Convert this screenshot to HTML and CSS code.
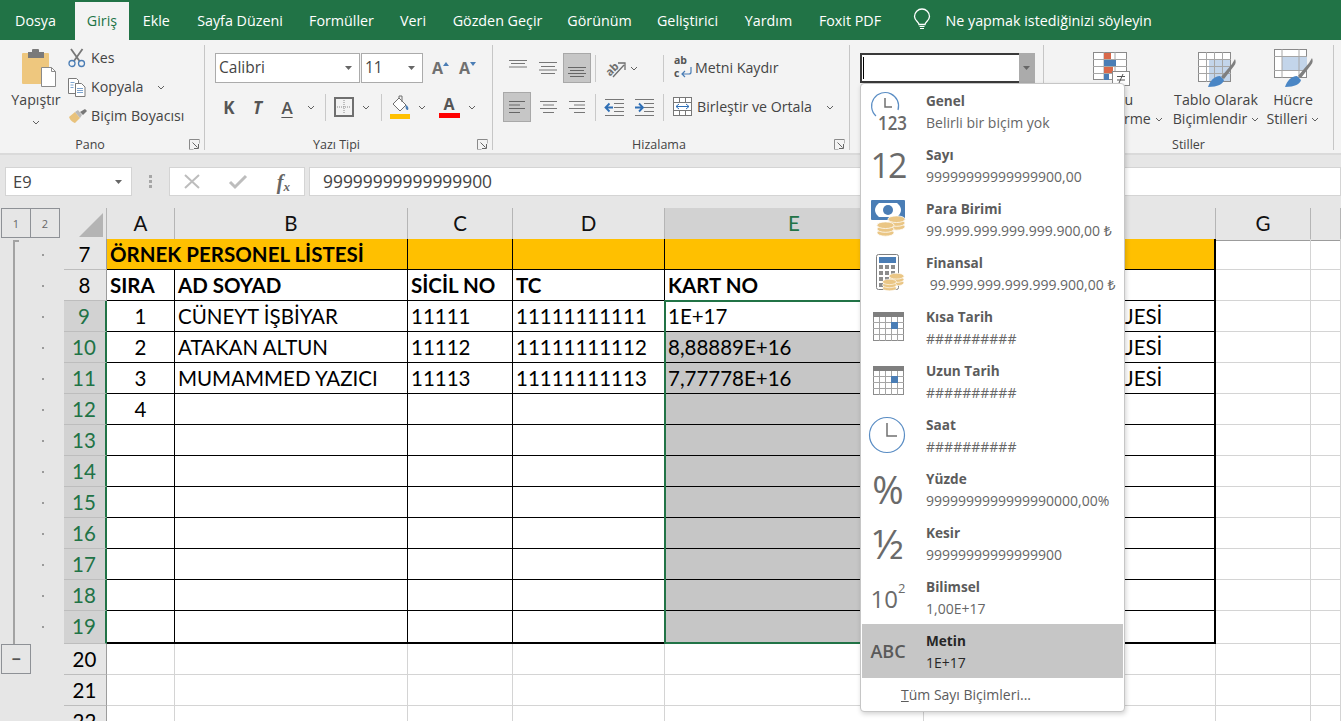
FILE: index.html
```html
<!DOCTYPE html>
<html lang="tr">
<head>
<meta charset="utf-8">
<title>Excel</title>
<link rel="stylesheet" href="styles.css">
</head>
<body>
<svg class="defs" aria-hidden="true">
  <symbol id="chev" viewBox="0 0 8 5"><path d="M1 1l3 3 3-3" fill="none" stroke="#606060" stroke-width="1"/></symbol>
  <symbol id="caret" viewBox="0 0 8 4"><path d="M0 0h7L3.500 4z" fill="#666"/></symbol>
  <symbol id="launch" viewBox="0 0 11 11"><path d="M.5 10.500V.5h10" fill="none" stroke="#8a8a8a"/><path d="M3.500 3.500l5 5M9.500 5v4.500H5" fill="none" stroke="#666"/><path d="M.5 10.500h4M10.500 .5v4" stroke="#b5b5b5"/></symbol>
  <symbol id="cal" viewBox="0 0 32 30">
    <rect x=".5" y=".5" width="30" height="28" fill="#fff" stroke="#8c8c8c"/>
    <rect x="0" y="0" width="31" height="5" fill="#7f7f7f"/>
    <path d="M6.500 5v24M12.500 5v24M18.500 5v24M24.500 5v24M0 10.500h31M0 16.500h31M0 22.500h31" stroke="#a6a6a6" fill="none"/>
    <rect x="18" y="10" width="7" height="7" fill="#4a7db5"/>
  </symbol>
  <symbol id="coins" viewBox="0 0 20 18">
    <g fill="#eac685" stroke="#fff" stroke-width=".8">
      <ellipse cx="10" cy="13" rx="9" ry="3.500"/><ellipse cx="10" cy="9" rx="9" ry="3.500"/><ellipse cx="10" cy="5" rx="9" ry="3.500"/>
    </g>
  </symbol>
</svg>

<header class="tabs">
  <div class="tab tab-file">Dosya</div>
  <div class="tab tab-on">Giriş</div>
  <div class="tab">Ekle</div>
  <div class="tab">Sayfa Düzeni</div>
  <div class="tab">Formüller</div>
  <div class="tab">Veri</div>
  <div class="tab">Gözden Geçir</div>
  <div class="tab">Görünüm</div>
  <div class="tab">Geliştirici</div>
  <div class="tab">Yardım</div>
  <div class="tab">Foxit PDF</div>
  <div class="tell">
    <svg width="18" height="20" viewBox="0 0 18 20"><path d="M6 14.500c0-2.500-4.500-4-4.500-8a7.300 7.300 0 0 1 15 0c0 4-4.500 5.500-4.500 8z" fill="none" stroke="#fff" stroke-width="1.300"/><path d="M6.500 16.500h5M7 18.500h4" stroke="#fff" stroke-width="1.200"/></svg>
    <span>Ne yapmak istediğinizi söyleyin</span>
  </div>
</header>

<section class="ribbon">
  <div class="group g-pano">
    <div class="g-body pano-body">
      <div class="paste">
        <svg class="paste-ic" width="36" height="39" viewBox="0 0 36 39"><rect x="1" y="4" width="27" height="31" rx="1" fill="#eec77e"/><rect x="7" y="3" width="16" height="6" fill="#7a7a7a"/><rect x="11" y="0" width="7" height="4" rx="1" fill="#7a7a7a"/><path d="M20.500 18.500h10l4 4v15h-14z" fill="#fff" stroke="#8a8a8a"/><path d="M30.500 18.500v4h4" fill="none" stroke="#8a8a8a"/></svg>
        <span class="paste-label">Yapıştır</span>
        <svg class="chev"><use href="#chev"/></svg>
      </div>
      <div class="cmds">
        <div class="cmd"><span class="cmd-ic"><svg width="18" height="20" viewBox="0 0 18 20"><path d="M3 1l8.500 12M14.500 1L6 13" stroke="#777" stroke-width="1.800" fill="none"/><circle cx="4" cy="15.500" r="3" fill="none" stroke="#4a7db5" stroke-width="1.300"/><circle cx="13.500" cy="15.500" r="3" fill="none" stroke="#4a7db5" stroke-width="1.300"/></svg></span><span class="cmd-txt">Kes</span></div>
        <div class="cmd"><span class="cmd-ic"><svg width="18" height="19" viewBox="0 0 18 19"><path d="M.5.500h8l2 2v3h-3v10H.5z" fill="#fff" stroke="#7a7a7a"/><path d="M7.500 5.500h6l3.500 3.500v9.500H7.500z" fill="#fff" stroke="#7a7a7a"/><path d="M9 10.500h6M9 12.500h6M9 14.500h6M2.500 4.500h4M2.500 7h3M2.500 9.500h3" stroke="#7da4cf"/></svg></span><span class="cmd-txt">Kopyala</span><svg class="chev cmd-chev"><use href="#chev"/></svg></div>
        <div class="cmd"><span class="cmd-ic"><svg width="19" height="15" viewBox="0 0 19 15"><path d="M1 8l6-5 5 6-5 5c-2-.3-5-3-6-6z" fill="#e8c27c"/><path d="M7 3l3-2 4 5-2 3z" fill="#b9b9b9"/><path d="M12 3l5-3 2 2-4 4z" fill="#777"/></svg></span><span class="cmd-txt">Biçim Boyacısı</span></div>
      </div>
    </div>
    <div class="g-foot"><span class="g-label">Pano</span><svg class="launcher"><use href="#launch"/></svg></div>
  </div>

  <div class="group g-font">
    <div class="g-body rows">
      <div class="tool-row">
        <div class="combo combo-font"><span class="combo-txt">Calibri</span><svg class="caret"><use href="#caret"/></svg></div>
        <div class="combo combo-size"><span class="combo-txt">11</span><svg class="caret"><use href="#caret"/></svg></div>
        <span class="tool w29 grow-a">A<svg class="mini" viewBox="0 0 6 4"><path d="M0 4l3-4 3 4z" fill="#4a7db5"/></svg></span>
        <span class="tool w25 grow-a">A<svg class="mini" viewBox="0 0 6 4"><path d="M0 0l3 4 3-4z" fill="#4a7db5"/></svg></span>
      </div>
      <div class="tool-row">
        <span class="tool w28 fmt fmt-b">K</span>
        <span class="tool w29 fmt fmt-i">T</span>
        <span class="tool w30 fmt fmt-u">A</span>
        <span class="tool w17"><svg class="chev"><use href="#chev"/></svg></span>
        <span class="vsep w12"></span>
        <span class="tool w26"><svg width="20" height="20" viewBox="0 0 20 20"><rect x="1" y="1" width="18" height="18" fill="none" stroke="#6f6f6f" stroke-width="2"/><path d="M10 3v14M3 10h14" stroke="#8a8a8a" stroke-dasharray="1 1"/></svg></span>
        <span class="tool w18"><svg class="chev"><use href="#chev"/></svg></span>
        <span class="vsep w12"></span>
        <span class="tool w26"><svg width="20" height="24" viewBox="0 0 20 24"><path d="M3 9l6-6 7 7-6 6z" fill="#fff" stroke="#6f6f6f"/><path d="M9 3V1h3v6" fill="none" stroke="#6f6f6f"/><path d="M16 10c2 1 3 3 2 5-2 0-3-2-2-5z" fill="#4a7db5"/><rect x="0" y="19" width="20" height="5" fill="#ffc000"/></svg></span>
        <span class="tool w18"><svg class="chev"><use href="#chev"/></svg></span>
        <span class="tool w31 fmt-color">A<i class="redbar"></i></span>
        <span class="tool w19"><svg class="chev"><use href="#chev"/></svg></span>
      </div>
    </div>
    <div class="g-foot"><span class="g-label">Yazı Tipi</span><svg class="launcher"><use href="#launch"/></svg></div>
  </div>

  <div class="group g-align">
    <div class="g-body rows">
      <div class="tool-row">
        <span class="tool w30"><svg class="lift" width="20" height="8" viewBox="0 0 20 8"><path d="M1 .5h18M3 3.500h14M1 7h18" stroke="#777" fill="none"/></svg></span>
        <span class="tool w30"><svg width="20" height="12" viewBox="0 0 20 12"><path d="M1 .5h18M3 4.500h14M1 8h18M3 11.500h14" stroke="#777" fill="none"/></svg></span>
        <span class="tool w28 pressed"><svg class="sink" width="20" height="10" viewBox="0 0 20 10"><path d="M1 .5h18M3 3.500h14M1 6.500h18M3 9.500h14" stroke="#666" fill="none"/></svg></span>
        <span class="vsep w12 vsep-l"></span>
        <span class="tool w24"><svg class="orient" width="22" height="20" viewBox="0 0 22 20"><text x="1" y="15" class="svg-ab" transform="rotate(-45 8 11)">ab</text><path d="M9 19L20 7M14 5h7v7" fill="none" stroke="#6f6f6f" stroke-width="1.300"/></svg></span>
        <span class="tool w14"><svg class="chev"><use href="#chev"/></svg></span>
        <span class="vsep w26 vsep-r"></span>
        <span class="tool wrap"><svg class="wrap-ic" width="20" height="24" viewBox="0 0 20 24"><text x="1" y="8" class="svg-abc">ab</text><text x="1" y="21" class="svg-abc">c</text><path d="M18 11v5a2 2 0 0 1-2 2H9M12 15l-3 3 3 3" fill="none" stroke="#4a7db5" stroke-width="1.200"/></svg><span class="cmd-txt">Metni Kaydır</span></span>
      </div>
      <div class="tool-row">
        <span class="tool w28 pressed mr2"><svg width="16" height="12" viewBox="0 0 16 12"><path d="M0 .5h16M0 4h11M0 7.500h16M0 11.500h11" stroke="#666" fill="none"/></svg></span>
        <span class="tool w30"><svg width="17" height="12" viewBox="0 0 17 12"><path d="M0 .5h17M3 4h11M0 7.500h17M3 11.500h11" stroke="#777" fill="none"/></svg></span>
        <span class="tool w28"><svg width="16" height="12" viewBox="0 0 16 12"><path d="M0 .5h16M5 4h11M0 7.500h16M5 11.500h11" stroke="#777" fill="none"/></svg></span>
        <span class="vsep w8 vsep-l"></span>
        <span class="tool w30"><svg width="19" height="17" viewBox="0 0 19 17"><path d="M0 .5h19M9 4.500h10M9 8.500h10M9 12.500h10M0 16.500h19" stroke="#777"/><path d="M8 8.500H1M4.500 4.500l-4 4 4 4" fill="none" stroke="#2f6fb5" stroke-width="1.800"/></svg></span>
        <span class="tool w30"><svg width="19" height="17" viewBox="0 0 19 17"><path d="M0 .5h19M9 4.500h10M9 8.500h10M9 12.500h10M0 16.500h19" stroke="#777"/><path d="M0 8.500h7M4 4.500l4 4-4 4" fill="none" stroke="#2f6fb5" stroke-width="1.800"/></svg></span>
        <span class="vsep w10 vsep-c"></span>
        <span class="tool merge"><svg class="merge-ic" width="20" height="20" viewBox="0 0 20 20"><rect x=".5" y=".5" width="18" height="18" fill="#fff" stroke="#777"/><path d="M0 5.500h19M0 13.500h19M6.500 0v5M12.500 0v5M6.500 14v5M12.500 14v5" stroke="#777"/><path d="M3 9.500h13M6 7l-3 2.500L6 12M13 7l3 2.500L13 12" fill="none" stroke="#2f6fb5"/></svg><span class="cmd-txt">Birleştir ve Ortala</span></span>
        <span class="tool w22"><svg class="chev"><use href="#chev"/></svg></span>
      </div>
    </div>
    <div class="g-foot"><span class="g-label">Hizalama</span><svg class="launcher"><use href="#launch"/></svg></div>
  </div>

  <div class="group g-num">
    <div class="g-body rows">
      <div class="tool-row">
        <div class="numbox"><span class="numbox-in"><i class="cursor"></i></span><span class="numbox-btn"><svg class="caret"><use href="#caret"/></svg></span></div>
      </div>
    </div>
  </div>

  <div class="group g-styles">
    <div class="g-body styles-body">
      <div class="big big-cond">
        <span class="big-ic"><svg width="38" height="36" viewBox="0 0 38 36"><rect x=".5" y=".5" width="33" height="27" fill="#fff" stroke="#8a8a8a"/><path d="M11 0v28M22 0v28M0 7.500h34M0 14.500h34M0 21.500h34" stroke="#a6a6a6"/><rect x="11" y="1" width="7" height="6" fill="#d9694a"/><rect x="11" y="8" width="12" height="6" fill="#4a7db5"/><rect x="11" y="15" width="9" height="6" fill="#d9694a"/><rect x="11" y="22" width="5" height="6" fill="#4a7db5"/><rect x="19.500" y="19.500" width="17" height="14" fill="#fff" stroke="#8a8a8a"/><path d="M24 24.500h8M24 28h8M30 22l-4 9" stroke="#555" fill="none"/></svg></span>
        <span class="big-txt">Koşullu</span>
        <span class="big-txt">Biçimlendirme<svg class="chev big-chev"><use href="#chev"/></svg></span>
      </div>
      <div class="big big-table">
        <span class="big-ic"><svg width="38" height="36" viewBox="0 0 38 36"><rect x=".5" y=".5" width="32" height="29" fill="#fff" stroke="#8a8a8a"/><rect x="11" y="8" width="21" height="21" fill="#c3d5ea"/><path d="M8.500 0v30M16.500 0v30M24.500 0v30M0 7.500h33M0 14.500h33M0 21.500h33" stroke="#a6a6a6"/><path d="M23 25l11-13 3-5c1 2 1 5-1 7L26 27z" fill="#7f7f7f"/><path d="M10 35c2-6 6-11 12-11l4 4c-1 4-6 7-16 7z" fill="#4a86c5"/></svg></span>
        <span class="big-txt">Tablo Olarak</span>
        <span class="big-txt">Biçimlendir<svg class="chev big-chev"><use href="#chev"/></svg></span>
      </div>
      <div class="big big-cell">
        <span class="big-ic"><svg width="39" height="39" viewBox="0 0 39 39"><rect x=".5" y=".5" width="32" height="28" fill="#fff" stroke="#8a8a8a"/><rect x="8" y="8" width="25" height="14" fill="#c3d5ea"/><path d="M8 0v29M25 0v29M0 7.500h33M0 21.500h33" stroke="#a6a6a6"/><path d="M24 27l11-13 3-5c1 2 1 5-1 7L27 29z" fill="#7f7f7f"/><path d="M11 38c2-6 6-11 12-11l4 4c-1 4-6 7-16 7z" fill="#4a86c5"/></svg></span>
        <span class="big-txt">Hücre</span>
        <span class="big-txt">Stilleri<svg class="chev big-chev"><use href="#chev"/></svg></span>
      </div>
    </div>
    <div class="g-foot"><span class="g-label">Stiller</span></div>
  </div>
</section>

<section class="fbar">
  <div class="namebox"><span>E9</span><svg class="caret"><use href="#caret"/></svg></div>
  <div class="grip"><i></i><i></i><i></i></div>
  <div class="fbtns">
    <svg width="16" height="15" viewBox="0 0 16 15"><path d="M1 1l14 13M15 1L1 14" stroke="#bdbdbd" stroke-width="2"/></svg>
    <svg width="18" height="15" viewBox="0 0 18 15"><path d="M1 8l5 5L17 2" fill="none" stroke="#bdbdbd" stroke-width="3"/></svg>
    <span class="fx">f<sub>x</sub></span>
  </div>
  <div class="finput">99999999999999900</div>
</section>

<main class="sheet">
  <aside class="outline">
    <div class="levels"><span class="lvl">1</span><span class="lvl">2</span></div>
    <div class="tree">
      <i class="dot"></i><i class="dot"></i><i class="dot"></i><i class="dot"></i><i class="dot"></i><i class="dot"></i><i class="dot"></i><i class="dot"></i><i class="dot"></i><i class="dot"></i><i class="dot"></i><i class="dot"></i><i class="dot"></i>
    </div>
    <div class="collapse">−</div>
  </aside>
  <div class="grid">
    <div class="gr gr-head">
      <div class="corner"><svg width="24" height="24" viewBox="0 0 24 24"><path d="M24 0v24H0z" fill="#b4b4b4"/></svg></div>
      <div class="ch">A</div><div class="ch">B</div><div class="ch">C</div><div class="ch">D</div><div class="ch ch-on">E</div><div class="ch"></div><div class="ch">G</div><div class="ch"></div>
    </div>
    <div class="gr"><div class="rh">7</div><div class="c k or title">ÖRNEK PERSONEL LİSTESİ</div><div class="c k or"></div><div class="c k or"></div><div class="c k or"></div><div class="c kf or"></div><div class="c"></div><div class="c"></div></div>
    <div class="gr"><div class="rh">8</div><div class="c k hb">SIRA</div><div class="c k hb">AD SOYAD</div><div class="c k hb">SİCİL NO</div><div class="c k hb">TC</div><div class="c k hb">KART NO</div><div class="c kf"></div><div class="c"></div><div class="c"></div></div>
    <div class="gr"><div class="rh on">9</div><div class="c k ct">1</div><div class="c k">CÜNEYT İŞBİYAR</div><div class="c k">11111</div><div class="c k">11111111111</div><div class="c k">1E+17</div><div class="c kf dep">JESİ</div><div class="c"></div><div class="c"></div></div>
    <div class="gr"><div class="rh on">10</div><div class="c k ct">2</div><div class="c k">ATAKAN ALTUN</div><div class="c k">11112</div><div class="c k">11111111112</div><div class="c k sel">8,88889E+16</div><div class="c kf dep">JESİ</div><div class="c"></div><div class="c"></div></div>
    <div class="gr"><div class="rh on">11</div><div class="c k ct">3</div><div class="c k">MUMAMMED YAZICI</div><div class="c k">11113</div><div class="c k">11111111113</div><div class="c k sel">7,77778E+16</div><div class="c kf dep">JESİ</div><div class="c"></div><div class="c"></div></div>
    <div class="gr"><div class="rh on">12</div><div class="c k ct">4</div><div class="c k"></div><div class="c k"></div><div class="c k"></div><div class="c k sel"></div><div class="c kf"></div><div class="c"></div><div class="c"></div></div>
    <div class="gr"><div class="rh on">13</div><div class="c k"></div><div class="c k"></div><div class="c k"></div><div class="c k"></div><div class="c k sel"></div><div class="c kf"></div><div class="c"></div><div class="c"></div></div>
    <div class="gr"><div class="rh on">14</div><div class="c k"></div><div class="c k"></div><div class="c k"></div><div class="c k"></div><div class="c k sel"></div><div class="c kf"></div><div class="c"></div><div class="c"></div></div>
    <div class="gr"><div class="rh on">15</div><div class="c k"></div><div class="c k"></div><div class="c k"></div><div class="c k"></div><div class="c k sel"></div><div class="c kf"></div><div class="c"></div><div class="c"></div></div>
    <div class="gr"><div class="rh on">16</div><div class="c k"></div><div class="c k"></div><div class="c k"></div><div class="c k"></div><div class="c k sel"></div><div class="c kf"></div><div class="c"></div><div class="c"></div></div>
    <div class="gr"><div class="rh on">17</div><div class="c k"></div><div class="c k"></div><div class="c k"></div><div class="c k"></div><div class="c k sel"></div><div class="c kf"></div><div class="c"></div><div class="c"></div></div>
    <div class="gr"><div class="rh on">18</div><div class="c k"></div><div class="c k"></div><div class="c k"></div><div class="c k"></div><div class="c k sel"></div><div class="c kf"></div><div class="c"></div><div class="c"></div></div>
    <div class="gr gr-last"><div class="rh on">19</div><div class="c k"></div><div class="c k"></div><div class="c k"></div><div class="c k"></div><div class="c k sel"></div><div class="c kf"></div><div class="c"></div><div class="c"></div></div>
    <div class="gr"><div class="rh">20</div><div class="c"></div><div class="c"></div><div class="c"></div><div class="c"></div><div class="c"></div><div class="c"></div><div class="c"></div><div class="c"></div></div>
    <div class="gr"><div class="rh">21</div><div class="c"></div><div class="c"></div><div class="c"></div><div class="c"></div><div class="c"></div><div class="c"></div><div class="c"></div><div class="c"></div></div>
    <div class="gr"><div class="rh">22</div><div class="c"></div><div class="c"></div><div class="c"></div><div class="c"></div><div class="c"></div><div class="c"></div><div class="c"></div><div class="c"></div></div>
    <div class="selbox"></div>
  </div>
</main>

<nav class="menu">
  <div class="mi"><span class="mi-ic"><svg width="36" height="46" viewBox="0 0 36 46"><path d="M6 28A13.500 13.500 0 1 1 28 22" fill="none" stroke="#5a8dc4" stroke-width="1.200"/><path d="M15 10v9h7" fill="none" stroke="#707070" stroke-width="1.500"/><text x="8" y="42" class="svg-123" textLength="29" lengthAdjust="spacingAndGlyphs">123</text></svg></span><span class="mi-t"><b>Genel</b><small>Belirli bir biçim yok</small></span></div>
  <div class="mi"><span class="mi-ic ic-12">12</span><span class="mi-t"><b>Sayı</b><small>99999999999999900,00</small></span></div>
  <div class="mi"><span class="mi-ic"><svg width="36" height="38" viewBox="0 0 36 38"><rect x="1" y="0" width="34" height="20" rx="1" fill="#4a7db5"/><path d="M5 10c0-4 4-7 4-7h18s4 3 4 7-4 7-4 7H9s-4-3-4-7z" fill="#fff"/><circle cx="18" cy="10" r="5" fill="#4a7db5"/><use href="#coins" x="17" y="14" width="19" height="18"/><use href="#coins" x="6" y="20" width="19" height="18"/></svg></span><span class="mi-t"><b>Para Birimi</b><small>99.999.999.999.999.900,00 ₺</small></span></div>
  <div class="mi"><span class="mi-ic"><svg width="34" height="38" viewBox="0 0 34 38"><rect x="5.500" y=".5" width="22" height="35" rx="2" fill="#fff" stroke="#7f7f7f"/><rect x="8" y="3" width="17" height="6" fill="#4a7db5"/><path d="M8 11h4v4H8zM14 11h4v4h-4zM20 11h4v4h-4zM8 17h4v4H8zM14 17h4v4h-4zM20 17h4v4h-4zM8 23h4v4H8zM14 23h4v4h-4zM8 29h4v4H8zM14 29h4v4h-4z" fill="#8c8c8c"/><use href="#coins" x="17" y="18" width="17" height="15"/><use href="#coins" x="10" y="24" width="17" height="14"/></svg></span><span class="mi-t"><b>Finansal</b><small class="pre"> 99.999.999.999.999.900,00 ₺</small></span></div>
  <div class="mi"><span class="mi-ic ic-cal"><svg width="32" height="30"><use href="#cal"/></svg></span><span class="mi-t"><b>Kısa Tarih</b><small>##########</small></span></div>
  <div class="mi"><span class="mi-ic ic-cal"><svg width="32" height="30"><use href="#cal"/></svg></span><span class="mi-t"><b>Uzun Tarih</b><small>##########</small></span></div>
  <div class="mi"><span class="mi-ic ic-clock"><svg width="38" height="38" viewBox="0 0 38 38"><circle cx="18" cy="19" r="17.500" fill="none" stroke="#5a8dc4" stroke-width="1.200"/><path d="M18 7v13h10" fill="none" stroke="#707070" stroke-width="1.500"/></svg></span><span class="mi-t"><b>Saat</b><small>##########</small></span></div>
  <div class="mi"><span class="mi-ic ic-pct">%</span><span class="mi-t"><b>Yüzde</b><small>9999999999999990000,00%</small></span></div>
  <div class="mi"><span class="mi-ic ic-frac">½</span><span class="mi-t"><b>Kesir</b><small>99999999999999900</small></span></div>
  <div class="mi"><span class="mi-ic ic-sci">10<sup>2</sup></span><span class="mi-t"><b>Bilimsel</b><small>1,00E+17</small></span></div>
  <div class="mi mi-on"><span class="mi-ic ic-abc">ABC</span><span class="mi-t"><b>Metin</b><small>1E+17</small></span></div>
  <div class="mfoot"><u>T</u>üm Sayı Biçimleri...</div>
</nav>
</body>
</html>
```
FILE: styles.css
```css
* { box-sizing: border-box; }
html, body { margin: 0; padding: 0; height: 721px; overflow: hidden; background: #fff; }
body { font-family: "Open Sans", "Noto Sans", sans-serif; font-size: 14.2px; color: #444; position: relative; }
.defs { width: 0; height: 0; position: absolute; }
svg { display: block; flex: none; overflow: visible; }

/* tab strip */
.tabs { height: 40px; background: #217346; color: #fff; display: grid; grid-template-columns: 75px 54px 54.5px 113px 90px 53px 116px 88px 88px 74px 89px 1fr; align-items: end; font-size: 14.3px; }
.tab { height: 38px; display: flex; align-items: center; justify-content: center; padding-bottom: 2px; white-space: nowrap; }
.tab-file { padding-right: 4px; }
.tab-on { background: #f3f3f3; color: #217346; }
.tell { height: 40px; display: flex; align-items: center; padding-left: 18px; gap: 15px; white-space: nowrap; }

/* ribbon */
.ribbon { height: 115px; background: #f3f3f3; border-bottom: 2px solid #dadada; padding-top: 5px; display: flex; }
.group { height: 105px; border-right: 1px solid #c6c6c6; display: flex; flex-direction: column; flex: none; }
.g-pano { width: 205px; }
.g-font { width: 288px; padding-left: 10px; }
.g-align { width: 357px; padding-left: 10px; }
.g-num { width: 194px; padding-left: 10px; }
.g-styles { width: 290px; }
.g-body { flex: 1; min-height: 0; }
.g-foot { height: 12px; display: flex; align-items: center; font-size: 12.500px; line-height: 12px; color: #444; padding-top: 1px; }
.g-label { flex: 1; text-align: center; }
.g-font .g-foot, .g-align .g-foot { margin-left: -10px; }
.launcher { width: 11px; height: 11px; margin: 0 4px 0 9px; }
.chev { width: 8px; height: 5px; }
.caret { width: 8px; height: 4px; }

.pano-body { display: flex; }
.paste { width: 50px; margin-left: 11px; padding-top: 4px; display: flex; flex-direction: column; align-items: center; }
.paste-ic { margin-left: 6px; }
.paste-label { margin-top: 2px; line-height: 20px; white-space: nowrap; }
.paste .chev { margin-top: 10px; }
.cmds { margin-left: 7px; display: flex; flex-direction: column; gap: 3px; }
.cmd { height: 26px; display: flex; align-items: center; white-space: nowrap; }
.cmd-ic { width: 23px; flex: none; }
.cmd-txt { margin-top: -2px; }
.cmd-chev { margin-left: 14px; }

.rows { padding-top: 8px; display: flex; flex-direction: column; gap: 9px; }
.tool-row { height: 30px; display: flex; align-items: center; }
.tool { height: 30px; display: flex; align-items: center; justify-content: center; flex: none; white-space: nowrap; }
.w14 { width: 14px; } .w17 { width: 17px; } .w18 { width: 18px; } .w19 { width: 19px; } .w22 { width: 22px; } .w24 { width: 24px; } .w25 { width: 25px; } .w26 { width: 26px; } .w28 { width: 28px; } .w29 { width: 29px; } .w30 { width: 30px; } .w31 { width: 31px; }
.vsep { height: 27px; display: block; flex: none; }
.vsep::after { content: ""; display: block; width: 1px; height: 27px; background: #c9c9c9; margin: 0 auto; }
.w8 { width: 8px; } .w10 { width: 10px; } .w12 { width: 12px; } .vsep.w26 { width: 26px; }
.vsep-l::after { margin-left: 4px; }
.vsep-r::after { margin-left: 22px; }
.mr2 { margin-right: 2px; }
.vsep-c::after { margin: 0 0 0 4px; }
.lift { margin-bottom: 9px; }
.sink { margin-top: 8px; }

.combo { height: 30px; background: #fff; border: 1px solid #ababab; display: flex; align-items: center; justify-content: space-between; padding: 0 6px 0 3px; flex: none; color: #444; }
.combo-font { width: 145px; margin-right: 1px; }
.combo-size { width: 62px; margin-right: 3px; }
.combo-txt { font-size: 15.500px; margin-top: -2px; }
.grow-a { font-size: 16px; font-weight: 700; color: #707070; }
.mini { width: 6px; height: 4px; align-self: flex-start; margin-top: 9px; }
.fmt { font-size: 17px; color: #555; font-weight: 700; }
.fmt-i { font-style: italic; }
.fmt-u { text-decoration: underline; text-underline-offset: 3px; font-weight: 600; }
.w31.fmt-color { font-size: 16px; font-weight: 700; color: #555; flex-direction: column; padding-left: 5px; line-height: 16px; gap: 1px; }
.redbar { display: block; width: 21px; height: 5px; background: #f00; }
.pressed { background: #c6c6c6; border: 1px solid #a8a8a8; }
.svg-ab { font: 700 11px "Open Sans", sans-serif; fill: #6f6f6f; }
.svg-abc { font: 700 10.500px "Open Sans", sans-serif; fill: #555; }
.wrap, .merge { justify-content: flex-start; }
.wrap { margin-left: 6px; gap: 2px; }
.merge { margin-left: 4px; gap: 4px; width: 144px; }
.tool.w22 { margin-left: 2px; }

.numbox { width: 175px; height: 30px; display: flex; border: 2px solid #3a3a3a; border-right: 0; background: #fff; }
.numbox-in { flex: 1; display: flex; padding: 2px 0 2px 1px; }
.cursor { width: 1px; background: #000; display: block; }
.numbox-btn { width: 16px; background: #ababab; margin: -2px 0; display: flex; align-items: center; justify-content: center; }

.styles-body { display: flex; padding-left: 13px; }
.big { display: flex; flex-direction: column; align-items: center; flex: none; }
.big-cond { width: 110px; }
.big-cond .big-txt { margin-right: 6px; }
.big-table { width: 94px; margin-left: 2px; }
.big-cell { width: 56px; margin-left: 2px; }
.big-ic { height: 45px; display: flex; align-items: flex-end; padding-bottom: 2px; }
.big-table .big-ic { padding-left: 1px; }
.big-txt { line-height: 19px; white-space: nowrap; display: flex; align-items: center; gap: 4px; }
.big-chev { margin-top: 1px; }

/* formula bar */
.fbar { height: 53px; background: #e6e6e6; display: flex; align-items: flex-start; padding: 12px 0 0 5px; }
.namebox { width: 127px; height: 29px; background: #fff; border: 1px solid #d4d4d4; display: flex; align-items: center; justify-content: space-between; padding: 0 8px 0 7px; font-size: 16.500px; color: #444; }
.grip { width: 37px; height: 29px; display: flex; flex-direction: column; align-items: center; justify-content: center; gap: 2px; }
.grip i { width: 3px; height: 3px; background: #a6a6a6; display: block; }
.fbtns { width: 136px; height: 29px; background: #fff; border: 1px solid #d4d4d4; display: flex; align-items: center; padding: 0 14px; justify-content: space-between; }
.fx { font: italic 700 20px/24px "Liberation Serif", serif; color: #666; }
.fx sub { font-size: 13px; vertical-align: -2px; line-height: 0; }
.finput { flex: 1; margin-left: 4px; height: 29px; background: #fff; border: 1px solid #d4d4d4; padding-left: 13px; font-size: 17.400px; line-height: 27px; color: #444; }

/* sheet */
.sheet { display: flex; height: 513px; overflow: hidden; }
.outline { width: 64px; background: #e6e6e6; flex: none; display: flex; flex-direction: column; }
.levels { display: flex; padding-left: 1px; height: 32px; }
.lvl { width: 30px; height: 30px; border: 1px solid #8e9196; margin-right: -1px; font-size: 11px; color: #666; display: flex; align-items: center; justify-content: center; }
.tree { margin-left: 13px; width: 6px; height: 404px; border-left: 2px solid #a3a3a3; border-top: 2px solid #a3a3a3; display: flex; flex-direction: column; }
.dot { display: block; width: 2px; height: 2px; background: #9a9a9a; flex: none; margin: 13px 0 16px 27px; }
.tree .dot:first-child { margin-top: 12px; }
.collapse { width: 30px; height: 30px; margin-left: 1px; border: 1px solid #8e9196; font-size: 16px; font-weight: 700; color: #555; display: flex; align-items: center; justify-content: center; }

.grid { flex: 1; position: relative; font-family: Lato, "Liberation Sans", sans-serif; font-size: 20.500px; color: #000; }
.gr { height: 31px; display: grid; grid-template-columns: 43px 68px 233px 105px 152px 259px 292px 95px 30px; }
.gr-last { height: 33px; }
.corner { background: #e6e6e6; border-right: 1px solid #b5b5b5; border-bottom: 1px solid #9c9c9c; display: flex; justify-content: flex-end; align-items: flex-end; padding: 0 3px 3px 0; }
.ch { background: #e6e6e6; border-right: 1px solid #b5b5b5; border-bottom: 1px solid #9c9c9c; text-align: center; line-height: 31px; color: #111; }
.ch-on { background: #d2d2d2; color: #217346; border-bottom: 2px solid #217346; }
.rh { background: #e6e6e6; border-right: 1px solid #9c9c9c; border-bottom: 1px solid #bdbdbd; text-align: center; line-height: 30px; padding-right: 1px; }
.rh.on { background: #d2d2d2; color: #217346; border-right: 2px solid #217346; }
.c { border-right: 1px solid #d4d4d4; border-bottom: 1px solid #d4d4d4; padding-left: 3px; line-height: 30px; white-space: nowrap; overflow: hidden; }
.k { border-color: #000; }
.kf { border-color: #000; border-right-width: 2px; }
.or { background: #ffc000; }
.title { grid-column: span 2; font-weight: 700; }
.hb { font-weight: 700; }
.ct { text-align: center; padding-left: 0; }
.sel { background: #c6c6c6; }
.dep { padding-left: 201px; }
.gr-last .c.k, .gr-last .c.kf { border-bottom-width: 2px; }
.selbox { position: absolute; left: 600px; top: 92px; width: 262px; height: 344px; border: 2px solid #217346; pointer-events: none; }

/* number format menu */
.menu { position: absolute; left: 860px; top: 83px; width: 265px; height: 629px; background: #fff; border: 1px solid #c6c6c6; border-radius: 4px; box-shadow: 1px 2px 5px rgba(0,0,0,.18); color: #5c5c5c; display: flex; flex-direction: column; }
.mi { height: 54px; flex: none; display: flex; margin: 0 1px; }
.mi-ic { width: 52px; flex: none; display: flex; align-items: center; justify-content: center; color: #6a6a6a; }
.ic-cal { padding-left: 1px; }
.mi-t { margin-left: 12px; padding-top: 6px; display: flex; flex-direction: column; white-space: nowrap; }
.mi-t b { font-weight: 700; font-size: 13.600px; line-height: 22px; color: #5c5c5c; }
.mi-t small { font-size: 14px; line-height: 22px; color: #666; }
.mi-t small.pre { white-space: pre; }
.mi-on { background: #c6c6c6; }
.mi-on .mi-t b, .mi-on .mi-t small { color: #262626; }
.svg-123 { font: 600 19px "Open Sans", sans-serif; fill: #6a6a6a; }
.ic-12 { font-size: 34px; letter-spacing: -2px; font-weight: 500; }
.ic-pct { font-size: 38px; }
.ic-frac { font-size: 40px; }
.ic-sci { font-size: 24px; line-height: 1; padding-top: 3px; }
.ic-sci sup { font-size: 13px; line-height: 1; margin-bottom: 21px; }
.ic-abc { font-size: 18px; font-weight: 600; color: #595959; }
.mfoot { flex: 1; padding-left: 40px; line-height: 34px; font-size: 14px; color: #5c5c5c; }
```
